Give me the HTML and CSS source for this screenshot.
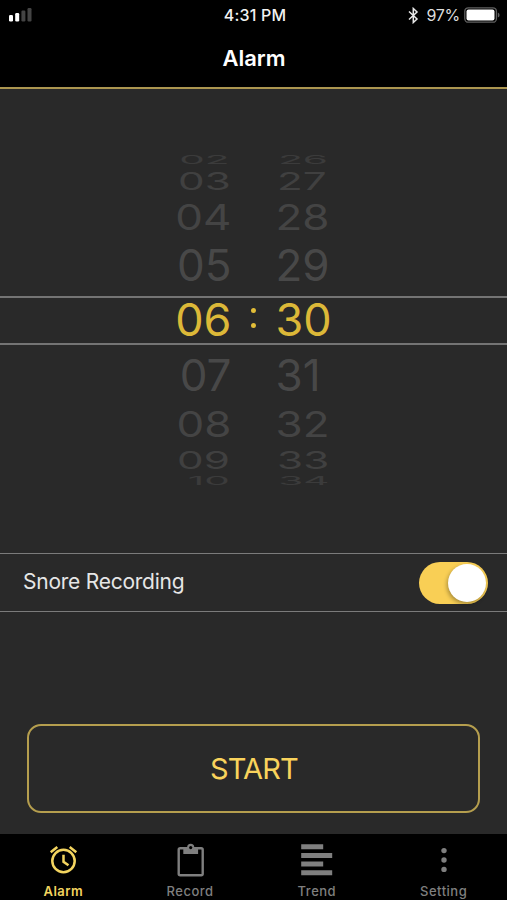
FILE: index.html
```html
<!DOCTYPE html>
<html lang="en">
<head>
<meta charset="utf-8">
<title>Alarm</title>
<link rel="stylesheet" href="styles.css">
</head>
<body>
<div class="app">
  <header class="header">
    <div class="status">
      <svg class="signal" width="24" height="14" viewBox="0 0 24 14"><g fill="#fff"><rect x="0" y="7" width="4" height="6.5" rx="1.2"/><rect x="6.2" y="5" width="4" height="8.5" rx="1.2"/></g><g fill="#444"><rect x="12.4" y="2.5" width="4" height="11" rx="1.2"/><rect x="18.5" y="0" width="4" height="13.5" rx="1.2"/></g></svg>
      <span class="clock">4:31 PM</span>
      <span class="power">
        <svg width="11" height="17" viewBox="0 0 11 17" fill="none" stroke="#e8e8e8" stroke-width="1.5"><path d="M1 4.500l8 7.500-3.700 3.500V1.500L9 5 1 12.500"/></svg>
        <span class="percent">97%</span>
        <svg class="battery" width="36" height="16" viewBox="0 0 36 16"><rect x=".8" y=".8" width="31.600" height="14.400" rx="3.500" fill="none" stroke="#606060" stroke-width="1.300"/><rect x="2.500" y="2.500" width="28" height="11" rx="2" fill="#fff"/><path d="M33.800 5.500q1.800.5 1.800 2.500t-1.800 2.500z" fill="#606060"/></svg>
      </span>
    </div>
    <h1 class="title">Alarm</h1>
  </header>

  <main class="main">
    <section class="picker">
      <div class="wheel hours">
        <span class="cell d4"><b>02</b></span>
        <span class="cell d3"><b>03</b></span>
        <span class="cell d2"><b>04</b></span>
        <span class="cell d1"><b>05</b></span>
        <span class="cell current"><b>06</b></span>
        <span class="cell d1"><b>07</b></span>
        <span class="cell d2"><b>08</b></span>
        <span class="cell d3"><b>09</b></span>
        <span class="cell d4"><b>10</b></span>
      </div>
      <div class="colon"><i></i><i></i></div>
      <div class="wheel minutes">
        <span class="cell d4"><b>26</b></span>
        <span class="cell d3"><b>27</b></span>
        <span class="cell d2"><b>28</b></span>
        <span class="cell d1"><b>29</b></span>
        <span class="cell current"><b>30</b></span>
        <span class="cell d1"><b>31</b></span>
        <span class="cell d2"><b>32</b></span>
        <span class="cell d3"><b>33</b></span>
        <span class="cell d4"><b>34</b></span>
      </div>
      <div class="band"></div>
    </section>

    <section class="option">
      <span class="option-label">Snore Recording</span>
      <span class="switch"><span class="knob"></span></span>
    </section>

    <button class="start">START</button>
  </main>

  <nav class="tabs">
    <a class="tab active">
      <svg width="32" height="34" viewBox="0 0 32 34" fill="none" stroke="currentColor" stroke-width="2.500"><circle cx="16.500" cy="18" r="11.200"/><path d="M16.500 11.800v7l5 3.400M3.700 9.300l6.600-5.300M29.300 9.300L22.700 4"/></svg>
      <span class="tab-label">Alarm</span>
    </a>
    <a class="tab">
      <svg width="32" height="34" viewBox="0 0 32 34" fill="none" stroke="currentColor"><rect x="4.700" y="5.200" width="24" height="27" rx="1.500" stroke-width="2.400"/><path d="M9.300 4.500h4a3.800 3.800 0 0 1 6.800 0h4V11H9.300z" fill="currentColor" stroke="none"/><circle cx="16.700" cy="4.300" r="2.800" fill="currentColor" stroke-width="1.500"/><circle cx="16.700" cy="4.600" r="1.600" fill="#000" stroke="none"/></svg>
      <span class="tab-label">Record</span>
    </a>
    <a class="tab">
      <svg width="32" height="34" viewBox="0 0 32 34" fill="currentColor"><path d="M.2 1.200h22v5h-22zM.2 9.900h31v5h-31zM.2 18.500h22v5h-22zM.2 27.200h31v5h-31z"/></svg>
      <span class="tab-label">Trend</span>
    </a>
    <a class="tab">
      <svg width="32" height="34" viewBox="0 0 32 34" fill="currentColor"><circle cx="16" cy="7.600" r="2.700"/><circle cx="16" cy="17" r="2.700"/><circle cx="16" cy="26.400" r="2.700"/></svg>
      <span class="tab-label">Setting</span>
    </a>
  </nav>
</div>
</body>
</html>
```
FILE: styles.css
```css
* { box-sizing: border-box; }
body { margin: 0; background: #000; font-family: Inter, "Liberation Sans", sans-serif; }
.app { width: 507px; height: 900px; display: flex; flex-direction: column; background: #292929; overflow: hidden; }

.header { height: 89px; flex: none; background: #000; border-bottom: 2px solid #ac9650; }
.status { height: 30px; display: grid; grid-template-columns: 1fr auto 1fr; align-items: center; padding: 0 7px 0 9px; color: #f2f2f2; }
.clock { margin-left: 1px; font-size: 16px; font-weight: 500; letter-spacing: 0.2px; line-height: 30px; }
.power { display: flex; justify-content: flex-end; align-items: center; }
.percent { margin: 0 4px 0 8px; font-size: 16px; letter-spacing: -0.3px; color: #ddd; }
.title { margin: 0; padding-left: 1px; font-size: 22px; font-weight: 600; line-height: 56px; text-align: center; color: #fff; }

.main { flex: 1; display: flex; flex-direction: column; }
.picker { position: relative; height: 464px; padding-top: 61.400px; display: grid; grid-template-columns: 231.500px 42px 1fr; align-items: start; }
.band { position: absolute; left: 0; right: 0; top: 207px; height: 49px; border: solid #747474; border-width: 2px 0; }
.wheel { display: flex; flex-direction: column; padding-top: 0.600px; }
.hours { align-items: flex-end; }
.minutes { align-items: flex-start; padding-left: 2px; }
.cell { display: flex; align-items: center; justify-content: center; font-size: 44px; line-height: 0; color: #484848; }
.cell b { display: block; font-weight: 400; }
.d1 { height: 47px; }
.d2 { height: 49.200px; color: #444; }
.d2 b { transform: scaleY(0.800); }
.d3 { height: 23.200px; color: #404040; }
.d3 b { transform: scale(0.960, 0.540); }
.d4 { height: 18.600px; color: #3b3b3b; }
.d4 b { transform: scale(0.920, 0.270); }
.current { height: 47px; margin: 8px 0; font-size: 45px; color: #dcb838; }
.colon { align-self: start; margin-top: 158px; display: flex; flex-direction: column; align-items: center; gap: 10px; padding-left: 2px; }
.colon i { width: 5px; height: 5px; border-radius: 50%; background: #e2bd38; }

.option { height: 59px; display: flex; align-items: center; justify-content: space-between; padding: 0 19px 0 23px; border: solid #7b7b7b; border-width: 1px 0; }
.option-label { padding-bottom: 3px; font-size: 21px; letter-spacing: -0.250px; color: #e6e6e6; }
.switch { width: 69px; height: 42px; padding: 2px; border-radius: 21px; display: flex; justify-content: flex-end; background: #f9cf55; }
.knob { width: 38px; height: 38px; border-radius: 50%; background: #fff; box-shadow: -1px 2px 4px #0005; }

.start { width: 453px; height: 89px; margin: 111.500px 0 0 27.400px; padding: 0; border: 2px solid #b59e4e; border-radius: 14px; background: none; font: 400 29px Inter, sans-serif; letter-spacing: -0.900px; color: #f9d35c; }

.tabs { height: 66px; flex: none; display: grid; grid-template-columns: repeat(4, 1fr); background: #000; }
.tab { display: flex; flex-direction: column; align-items: center; padding-top: 9px; color: #7f7f7f; }
.tab svg { display: block; }
.tab-label { margin-top: 5px; font-size: 13px; font-weight: 500; line-height: 18px; letter-spacing: 0.500px; }
.active { color: #f3d45f; }
.active .tab-label { font-weight: 600; }
```
